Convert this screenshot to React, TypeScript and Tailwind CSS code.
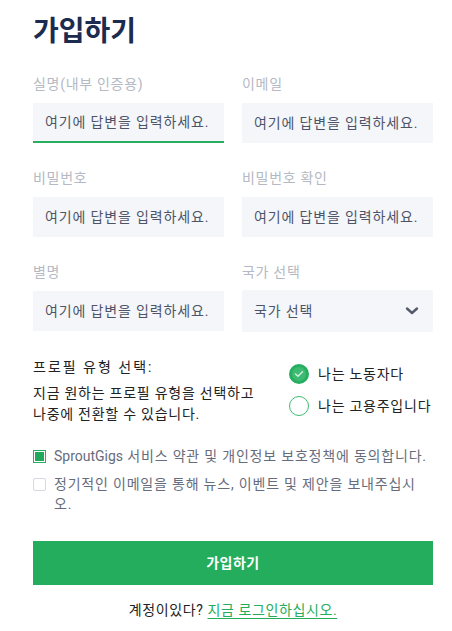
import React from "react";

const font = { fontFamily: 'Roboto, "Noto Sans CJK KR", sans-serif' };

function Field({ label, focused }: { label: string; focused?: boolean }) {
  return (
    <div className="flex flex-col">
      <div className="text-[14px] leading-[20px] tracking-[0.7px] text-[#b4b9c4] mb-[9px]">{label}</div>
      <div
        className={
          "h-[40px] bg-[#f4f6fa] flex items-center pl-[12px] text-[14px] tracking-[0.85px] text-[#4d5468] " +
          (focused ? "border-b-2 border-[#27ae60]" : "")
        }
      >
        여기에 답변을 입력하세요.
      </div>
    </div>
  );
}

export default function App() {
  return (
    <div className="w-[452px] h-[631px] bg-white" style={font}>
      <div className="ml-[33px] w-[400px] pt-[12px]">
        <h1 className="text-[28px] leading-[40px] font-bold text-[#1c2b50]">가입하기</h1>
        <div className="grid grid-cols-2 gap-x-[18px] gap-y-[25px] mt-[22px]">
          <Field label="실명(내부 인증용)" focused />
          <Field label="이메일" />
          <Field label="비밀번호" />
          <Field label="비밀번호 확인" />
          <Field label="별명" />
          <div className="flex flex-col">
            <div className="text-[14px] leading-[20px] tracking-[0.7px] text-[#b4b9c4] mb-[8px]">국가 선택</div>
            <div className="h-[42px] bg-[#f4f6fa] rounded-[2px] flex items-center justify-between pl-[12px] pr-[14px] text-[14px] tracking-[0.85px] text-[#4d5468]">
              <span>국가 선택</span>
              <svg width="14" height="10" viewBox="0 0 14 10" fill="none">
                <path d="M2 2.5 L7 7 L12 2.5" stroke="#555b6b" strokeWidth="2.4" strokeLinecap="round" strokeLinejoin="round" />
              </svg>
            </div>
          </div>
        </div>

        <div className="flex mt-[24px]">
          <div className="w-[256px]">
            <div className="text-[14px] leading-[22px] tracking-[2px] text-[#222]">프로필 유형 선택:</div>
            <div className="mt-[5px] text-[14px] leading-[21px] tracking-[0.75px] text-[#222]">
              지금 원하는 프로필 유형을 선택하고
              <br />
              나중에 전환할 수 있습니다.
            </div>
          </div>
          <div className="flex flex-col gap-[12px] pt-[8px]">
            <div className="flex items-center gap-[9px]">
              <div className="w-[20px] h-[20px] rounded-full bg-[#27ae60] flex items-center justify-center">
                <div className="w-[14px] h-[14px] rounded-full bg-[#3dbb72] flex items-center justify-center">
                  <svg width="10" height="8" viewBox="0 0 10 8" fill="none">
                    <path d="M1.5 4 L4 6.3 L8.5 1.7" stroke="#cfeedd" strokeWidth="1.5" strokeLinecap="round" strokeLinejoin="round" />
                  </svg>
                </div>
              </div>
              <span className="text-[14px] leading-[20px] tracking-[0.75px] text-[#222]">나는 노동자다</span>
            </div>
            <div className="flex items-center gap-[9px]">
              <div className="w-[20px] h-[20px] rounded-full border-[1.5px] border-[#3dbb72]" />
              <span className="text-[14px] leading-[20px] tracking-[0.75px] text-[#222]">나는 고용주입니다</span>
            </div>
          </div>
        </div>

        <div className="mt-[21px] flex items-center gap-[8px]">
          <div className="w-[13px] h-[13px] border border-[#27ae60] flex items-center justify-center shrink-0">
            <div className="w-[9px] h-[9px] bg-[#22a85a]" />
          </div>
          <span className="text-[14px] leading-[20px] tracking-[0.8px] text-[#666c7c] whitespace-nowrap">
            <span className="tracking-normal">SproutGigs</span> 서비스 약관 및 개인정보 보호정책에 동의합니다.
          </span>
        </div>
        <div className="mt-[8px] flex items-start gap-[8px]">
          <div className="w-[13px] h-[13px] border border-[#d6d9e0] rounded-[2px] shrink-0 mt-[4px]" />
          <span className="text-[14px] leading-[20px] tracking-[0.8px] text-[#666c7c] pr-[8px]">
            정기적인 이메일을 통해 뉴스, 이벤트 및 제안을 보내주십시오.
          </span>
        </div>

        <button className="mt-[27px] w-[400px] h-[44px] bg-[#23ad5c] text-white text-[14px] font-bold tracking-[0.5px] flex items-center justify-center">
          가입하기
        </button>

        <div className="mt-[15px] text-center text-[14px] leading-[20px] tracking-[0.6px] text-[#222]">
          계정이있다? <a className="text-[#23ad5c] underline underline-offset-[3px]">지금 로그인하십시오.</a>
        </div>
      </div>
    </div>
  );
}
